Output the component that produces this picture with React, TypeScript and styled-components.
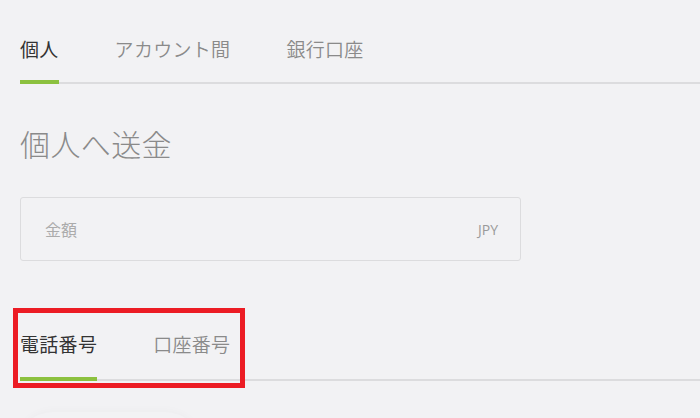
import React from "react";
import styled, { createGlobalStyle } from "styled-components";

const Global = createGlobalStyle`
  html, body { margin: 0; padding: 0; background: #f2f2f4; }
  body { font-family: "Open Sans", "Noto Sans CJK JP", sans-serif; overflow: hidden; }
`;

const Page = styled.div`
  padding: 0 0 0 20px;
  height: 418px;
  box-sizing: border-box;
  overflow: hidden;
`;

const TabBar = styled.div<{ $top: number }>`
  position: relative;
  display: flex;
  gap: 56px;
  border-bottom: 2px solid #dcdcde;
  padding-top: ${(p) => p.$top}px;
`;

const Tab = styled.div<{ $active?: boolean }>`
  font-family: "Noto Sans CJK JP", sans-serif;
  font-size: 19px;
  line-height: 26px;
  letter-spacing: 0.3px;
  font-weight: ${(p) => (p.$active ? 400 : 350)};
  color: ${(p) => (p.$active ? "#333" : "#8a8a8a")};
  padding-bottom: 18px;
  border-bottom: 4px solid ${(p) => (p.$active ? "#8cc13f" : "transparent")};
  margin-bottom: -2px;
  white-space: nowrap;
`;

const Heading = styled.h1`
  margin: 39px 0 0;
  font-family: "Noto Sans CJK JP", sans-serif;
  font-weight: 300;
  font-size: 30px;
  line-height: 40px;
  letter-spacing: 0.4px;
  color: #8a8a8a;
`;

const Field = styled.div`
  margin-top: 34px;
  width: 501px;
  height: 64px;
  box-sizing: border-box;
  border: 1px solid #dcdcde;
  border-radius: 3px;
  display: flex;
  align-items: center;
  justify-content: space-between;
  padding: 0 22px 0 24px;
`;

const Placeholder = styled.span`
  font-family: "Noto Sans CJK JP", sans-serif;
  font-size: 16px;
  color: #ababab;
`;

const Currency = styled.span`
  font-family: "Open Sans", sans-serif;
  font-size: 14px;
  color: #9a9a9a;
`;

const SubBar = styled(TabBar)`
  margin-top: 40px;
`;

const SubTab = styled(Tab)`
  padding-bottom: 20px;
`;

const Highlight = styled.div`
  position: absolute;
  left: -7px;
  top: 7px;
  width: 232px;
  height: 80px;
  box-sizing: border-box;
  border: 5px solid #ec1c24;
  pointer-events: none;
`;

const Card = styled.div`
  margin-top: 31px;
  width: 190px;
  height: 40px;
  margin-left: -6px;
  border-radius: 40px 40px 0 0;
  box-shadow: 0 -2px 8px rgba(0, 0, 0, 0.025);
`;

export default function App() {
  return (
    <>
      <Global />
      <Page>
        <TabBar $top={36}>
          <Tab $active>個人</Tab>
          <Tab>アカウント間</Tab>
          <Tab>銀行口座</Tab>
        </TabBar>
        <Heading>個人へ送金</Heading>
        <Field>
          <Placeholder>金額</Placeholder>
          <Currency>JPY</Currency>
        </Field>
        <SubBar $top={30}>
          <SubTab $active>電話番号</SubTab>
          <SubTab>口座番号</SubTab>
          <Highlight />
        </SubBar>
        <Card />
      </Page>
    </>
  );
}
